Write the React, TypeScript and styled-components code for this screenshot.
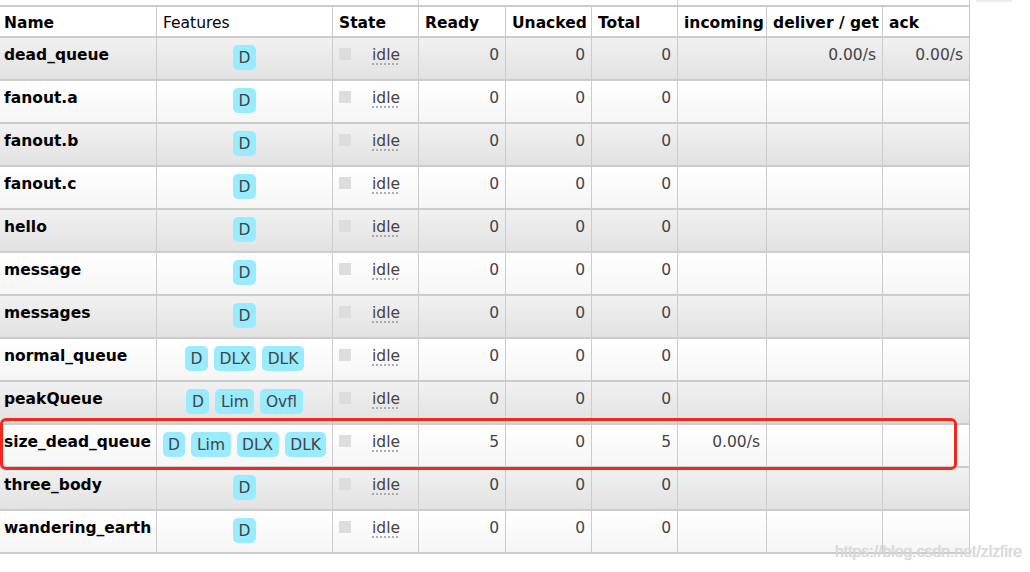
import React from "react";
import styled, { createGlobalStyle } from "styled-components";

const GlobalStyle = createGlobalStyle`
  html, body {
    margin: 0;
    padding: 0;
    background: #fff;
  }
  body {
    font-family: "DejaVu Sans", Verdana, sans-serif;
  }
`;

type Queue = {
  name: string;
  features: string[];
  ready: number;
  unacked: number;
  total: number;
  incoming?: string;
  deliver?: string;
  ack?: string;
};

const queues: Queue[] = [
  { name: "dead_queue", features: ["D"], ready: 0, unacked: 0, total: 0, deliver: "0.00/s", ack: "0.00/s" },
  { name: "fanout.a", features: ["D"], ready: 0, unacked: 0, total: 0 },
  { name: "fanout.b", features: ["D"], ready: 0, unacked: 0, total: 0 },
  { name: "fanout.c", features: ["D"], ready: 0, unacked: 0, total: 0 },
  { name: "hello", features: ["D"], ready: 0, unacked: 0, total: 0 },
  { name: "message", features: ["D"], ready: 0, unacked: 0, total: 0 },
  { name: "messages", features: ["D"], ready: 0, unacked: 0, total: 0 },
  { name: "normal_queue", features: ["D", "DLX", "DLK"], ready: 0, unacked: 0, total: 0 },
  { name: "peakQueue", features: ["D", "Lim", "Ovfl"], ready: 0, unacked: 0, total: 0 },
  { name: "size_dead_queue", features: ["D", "Lim", "DLX", "DLK"], ready: 5, unacked: 0, total: 5, incoming: "0.00/s" },
  { name: "three_body", features: ["D"], ready: 0, unacked: 0, total: 0 },
  { name: "wandering_earth", features: ["D"], ready: 0, unacked: 0, total: 0 },
];

const colWidths = [157, 176, 86, 87, 86, 86, 89, 116, 87];

const Page = styled.div`
  position: relative;
  display: flex;
  align-items: flex-start;
  width: 1030px;
  height: 572px;
  overflow: hidden;
  background: #fff;
`;

const Table = styled.table`
  flex: none;
  width: 970px;
  table-layout: fixed;
  border-collapse: separate;
  border-spacing: 0;
  font-size: 15.5px;
  color: #444;
`;

const GroupCell = styled.th`
  height: 7px;
  box-sizing: border-box;
  padding: 0;
  border-bottom: 2px solid #ccc;
  border-right: 1px solid #ccc;
  font-size: 0;
`;

const HeadCell = styled.th<{ $plain?: boolean; $first?: boolean }>`
  height: 31px;
  box-sizing: border-box;
  padding: 2px 0 0 ${(p) => (p.$first ? "4px" : "6px")};
  text-align: left;
  vertical-align: middle;
  white-space: nowrap;
  overflow: hidden;
  color: #000;
  font-weight: ${(p) => (p.$plain ? "normal" : "bold")};
  background: #fff;
  border-right: 1px solid #ccc;
  border-bottom: 2px solid #ccc;
`;

const Row = styled.tr<{ $alt: boolean }>`
  background: ${(p) =>
    p.$alt
      ? "linear-gradient(to bottom, #f1f1f1, #e1e1e1)"
      : "linear-gradient(to bottom, #ffffff, #f5f5f5)"};
`;

const Cell = styled.td<{ $align?: "left" | "right" }>`
  height: 43px;
  box-sizing: border-box;
  padding: 8px 6px 0 6px;
  vertical-align: top;
  text-align: ${(p) => p.$align ?? "left"};
  white-space: nowrap;
  border-right: 1px solid #ccc;
  border-bottom: 2px solid #ccc;
  line-height: 19px;
`;

const NameCell = styled(Cell)`
  padding-left: 4px;
  font-weight: bold;
  color: #000;
`;

const FeatureCell = styled(Cell)`
  padding: 7px 2px 0 2px;
`;

const FeatureList = styled.div`
  display: flex;
  justify-content: center;
  gap: 6px;
`;

const Badge = styled.span`
  display: block;
  height: 25px;
  line-height: 27px;
  padding: 0 5.5px;
  border-radius: 5px;
  background: #99ebff;
  color: #444;
`;

const StateBox = styled.div`
  display: flex;
  align-items: flex-start;
  gap: 21px;
`;

const StatusSquare = styled.span`
  display: block;
  width: 12px;
  height: 12px;
  margin-top: 2px;
  background: #ddd;
  flex: none;
`;

const StateText = styled.abbr`
  color: #444;
  text-decoration: underline dotted #999;
  text-underline-offset: 4px;
`;

const SideStrip = styled.div`
  margin-left: 6px;
  width: 36px;
  height: 2px;
  background: #ededed;
`;

const Highlight = styled.div`
  position: absolute;
  left: 0;
  top: 418px;
  width: 957px;
  height: 52px;
  box-sizing: border-box;
  border: 3px solid #f5271d;
  border-radius: 6px;
  pointer-events: none;
`;

const Watermark = styled.div`
  position: absolute;
  left: 835px;
  top: 543px;
  font-family: "Liberation Sans", Arial, sans-serif;
  font-size: 15.8px;
  color: #dcdcdc;
  text-shadow: 0 0 1px #c4c4c4;
  white-space: nowrap;
`;

const App = () => {
  return (
    <Page>
      <GlobalStyle />
      <Table>
        <colgroup>
          {colWidths.map((w, i) => (
            <col key={i} style={{ width: w }} />
          ))}
        </colgroup>
        <thead>
          <tr>
            <GroupCell colSpan={3} />
            <GroupCell colSpan={3} />
            <GroupCell colSpan={3} />
          </tr>
          <tr>
            <HeadCell $first>Name</HeadCell>
            <HeadCell $plain>Features</HeadCell>
            <HeadCell>State</HeadCell>
            <HeadCell>Ready</HeadCell>
            <HeadCell>Unacked</HeadCell>
            <HeadCell>Total</HeadCell>
            <HeadCell>incoming</HeadCell>
            <HeadCell>deliver / get</HeadCell>
            <HeadCell>ack</HeadCell>
          </tr>
        </thead>
        <tbody>
          {queues.map((q, i) => (
            <Row key={q.name} $alt={i % 2 === 0}>
              <NameCell>{q.name}</NameCell>
              <FeatureCell>
                <FeatureList>
                  {q.features.map((f) => (
                    <Badge key={f}>{f}</Badge>
                  ))}
                </FeatureList>
              </FeatureCell>
              <Cell>
                <StateBox>
                  <StatusSquare />
                  <StateText title="idle">idle</StateText>
                </StateBox>
              </Cell>
              <Cell $align="right">{q.ready}</Cell>
              <Cell $align="right">{q.unacked}</Cell>
              <Cell $align="right">{q.total}</Cell>
              <Cell $align="right">{q.incoming ?? ""}</Cell>
              <Cell $align="right">{q.deliver ?? ""}</Cell>
              <Cell $align="right">{q.ack ?? ""}</Cell>
            </Row>
          ))}
        </tbody>
      </Table>
      <SideStrip />
      <Highlight />
      <Watermark>https://blog.csdn.net/zlzfire</Watermark>
    </Page>
  );
};

export default App;
